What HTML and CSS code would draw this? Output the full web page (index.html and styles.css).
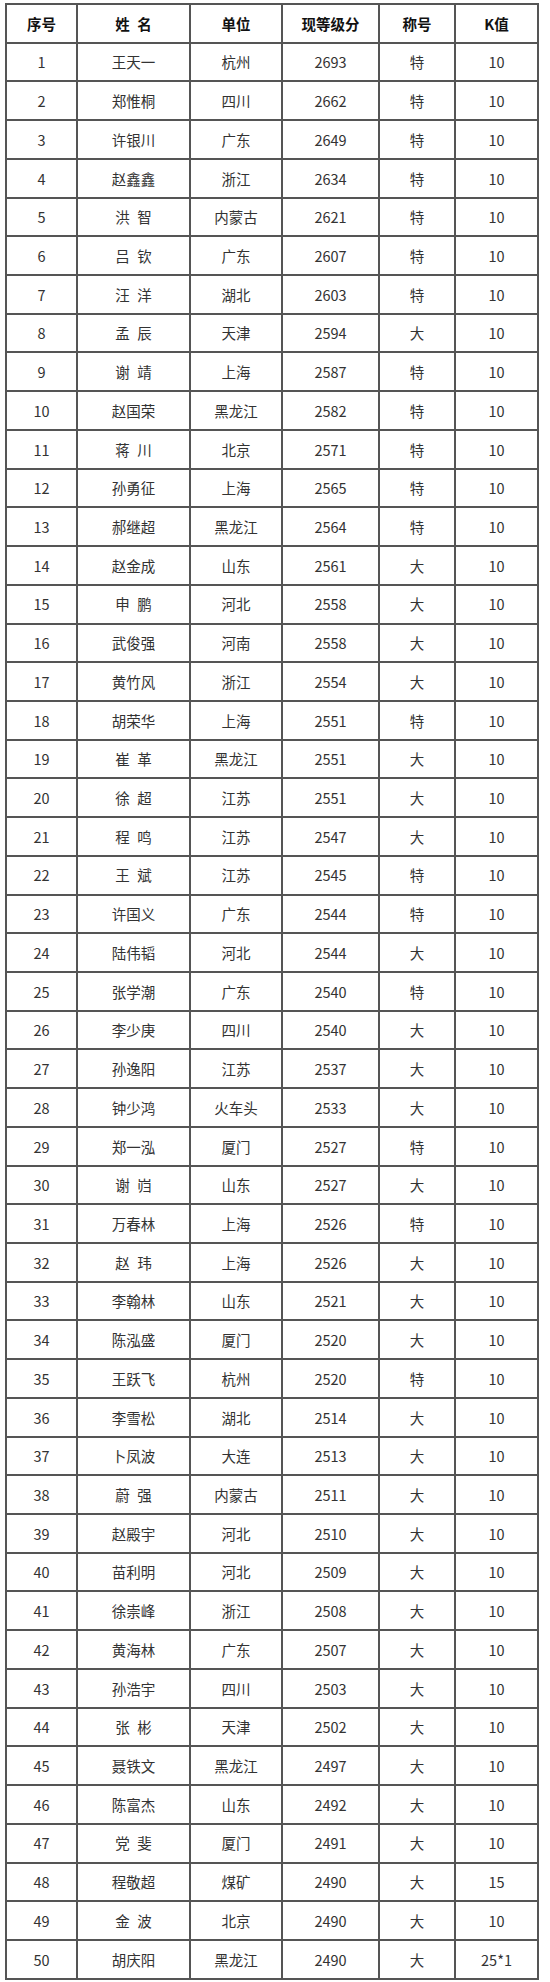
FILE: index.html
```html
<!DOCTYPE html>
<html lang="zh-CN">
<head>
<meta charset="utf-8">
<title>等级分排名</title>
<link rel="stylesheet" href="styles.css">
</head>
<body>
<table class="rank">
<colgroup>
<col class="c-no"><col class="c-name"><col class="c-unit"><col class="c-score"><col class="c-title"><col class="c-k">
</colgroup>
<thead>
<tr><th>序号</th><th>姓 名</th><th>单位</th><th>现等级分</th><th>称号</th><th>K值</th></tr>
</thead>
<tbody>
<tr><td>1</td><td>王天一</td><td>杭州</td><td>2693</td><td>特</td><td>10</td></tr>
<tr><td>2</td><td>郑惟桐</td><td>四川</td><td>2662</td><td>特</td><td>10</td></tr>
<tr><td>3</td><td>许银川</td><td>广东</td><td>2649</td><td>特</td><td>10</td></tr>
<tr><td>4</td><td>赵鑫鑫</td><td>浙江</td><td>2634</td><td>特</td><td>10</td></tr>
<tr><td>5</td><td>洪 智</td><td>内蒙古</td><td>2621</td><td>特</td><td>10</td></tr>
<tr><td>6</td><td>吕 钦</td><td>广东</td><td>2607</td><td>特</td><td>10</td></tr>
<tr><td>7</td><td>汪 洋</td><td>湖北</td><td>2603</td><td>特</td><td>10</td></tr>
<tr><td>8</td><td>孟 辰</td><td>天津</td><td>2594</td><td>大</td><td>10</td></tr>
<tr><td>9</td><td>谢 靖</td><td>上海</td><td>2587</td><td>特</td><td>10</td></tr>
<tr><td>10</td><td>赵国荣</td><td>黑龙江</td><td>2582</td><td>特</td><td>10</td></tr>
<tr><td>11</td><td>蒋 川</td><td>北京</td><td>2571</td><td>特</td><td>10</td></tr>
<tr><td>12</td><td>孙勇征</td><td>上海</td><td>2565</td><td>特</td><td>10</td></tr>
<tr><td>13</td><td>郝继超</td><td>黑龙江</td><td>2564</td><td>特</td><td>10</td></tr>
<tr><td>14</td><td>赵金成</td><td>山东</td><td>2561</td><td>大</td><td>10</td></tr>
<tr><td>15</td><td>申 鹏</td><td>河北</td><td>2558</td><td>大</td><td>10</td></tr>
<tr><td>16</td><td>武俊强</td><td>河南</td><td>2558</td><td>大</td><td>10</td></tr>
<tr><td>17</td><td>黄竹风</td><td>浙江</td><td>2554</td><td>大</td><td>10</td></tr>
<tr><td>18</td><td>胡荣华</td><td>上海</td><td>2551</td><td>特</td><td>10</td></tr>
<tr><td>19</td><td>崔 革</td><td>黑龙江</td><td>2551</td><td>大</td><td>10</td></tr>
<tr><td>20</td><td>徐 超</td><td>江苏</td><td>2551</td><td>大</td><td>10</td></tr>
<tr><td>21</td><td>程 鸣</td><td>江苏</td><td>2547</td><td>大</td><td>10</td></tr>
<tr><td>22</td><td>王 斌</td><td>江苏</td><td>2545</td><td>特</td><td>10</td></tr>
<tr><td>23</td><td>许国义</td><td>广东</td><td>2544</td><td>特</td><td>10</td></tr>
<tr><td>24</td><td>陆伟韬</td><td>河北</td><td>2544</td><td>大</td><td>10</td></tr>
<tr><td>25</td><td>张学潮</td><td>广东</td><td>2540</td><td>特</td><td>10</td></tr>
<tr><td>26</td><td>李少庚</td><td>四川</td><td>2540</td><td>大</td><td>10</td></tr>
<tr><td>27</td><td>孙逸阳</td><td>江苏</td><td>2537</td><td>大</td><td>10</td></tr>
<tr><td>28</td><td>钟少鸿</td><td>火车头</td><td>2533</td><td>大</td><td>10</td></tr>
<tr><td>29</td><td>郑一泓</td><td>厦门</td><td>2527</td><td>特</td><td>10</td></tr>
<tr><td>30</td><td>谢 岿</td><td>山东</td><td>2527</td><td>大</td><td>10</td></tr>
<tr><td>31</td><td>万春林</td><td>上海</td><td>2526</td><td>特</td><td>10</td></tr>
<tr><td>32</td><td>赵 玮</td><td>上海</td><td>2526</td><td>大</td><td>10</td></tr>
<tr><td>33</td><td>李翰林</td><td>山东</td><td>2521</td><td>大</td><td>10</td></tr>
<tr><td>34</td><td>陈泓盛</td><td>厦门</td><td>2520</td><td>大</td><td>10</td></tr>
<tr><td>35</td><td>王跃飞</td><td>杭州</td><td>2520</td><td>特</td><td>10</td></tr>
<tr><td>36</td><td>李雪松</td><td>湖北</td><td>2514</td><td>大</td><td>10</td></tr>
<tr><td>37</td><td>卜凤波</td><td>大连</td><td>2513</td><td>大</td><td>10</td></tr>
<tr><td>38</td><td>蔚 强</td><td>内蒙古</td><td>2511</td><td>大</td><td>10</td></tr>
<tr><td>39</td><td>赵殿宇</td><td>河北</td><td>2510</td><td>大</td><td>10</td></tr>
<tr><td>40</td><td>苗利明</td><td>河北</td><td>2509</td><td>大</td><td>10</td></tr>
<tr><td>41</td><td>徐崇峰</td><td>浙江</td><td>2508</td><td>大</td><td>10</td></tr>
<tr><td>42</td><td>黄海林</td><td>广东</td><td>2507</td><td>大</td><td>10</td></tr>
<tr><td>43</td><td>孙浩宇</td><td>四川</td><td>2503</td><td>大</td><td>10</td></tr>
<tr><td>44</td><td>张 彬</td><td>天津</td><td>2502</td><td>大</td><td>10</td></tr>
<tr><td>45</td><td>聂铁文</td><td>黑龙江</td><td>2497</td><td>大</td><td>10</td></tr>
<tr><td>46</td><td>陈富杰</td><td>山东</td><td>2492</td><td>大</td><td>10</td></tr>
<tr><td>47</td><td>党 斐</td><td>厦门</td><td>2491</td><td>大</td><td>10</td></tr>
<tr><td>48</td><td>程敬超</td><td>煤矿</td><td>2490</td><td>大</td><td>15</td></tr>
<tr><td>49</td><td>金 波</td><td>北京</td><td>2490</td><td>大</td><td>10</td></tr>
<tr><td>50</td><td>胡庆阳</td><td>黑龙江</td><td>2490</td><td>大</td><td>25*1</td></tr>
</tbody>
</table>
</body>
</html>
```

FILE: styles.css
```css
html, body {
  margin: 0;
  padding: 0;
  background: #fff;
}

body {
  padding: 3px 0 0 5px;
}

.rank {
  table-layout: fixed;
  width: 534px;
  border-collapse: separate;
  border-spacing: 0;
  border-top: 2px solid #555;
  border-left: 2px solid #555;
  font-family: "Noto Sans CJK SC", "Noto Sans", sans-serif;
  font-size: 14.5px;
  color: #333;
  word-spacing: 0.3em;
}

.c-no { width: 71px; }
.c-name { width: 113px; }
.c-unit { width: 92px; }
.c-score { width: 97px; }
.c-title { width: 76px; }
.c-k { width: 83px; }

.rank tr {
  height: 38.72px;
}

.rank th,
.rank td {
  box-sizing: border-box;
  padding: 0;
  text-align: center;
  vertical-align: middle;
  border-right: 2px solid #555;
  border-bottom: 2px solid #555;
  line-height: 1.2;
  white-space: nowrap;
}

.rank th {
  font-weight: bold;
  color: #111;
}
```
